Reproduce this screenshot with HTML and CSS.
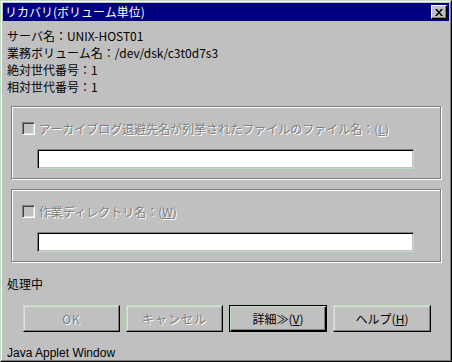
FILE: index.html
```html
<!DOCTYPE html>
<html lang="ja">
<head>
  <meta charset="UTF-8">
  <title>リカバリ(ボリューム単位)</title>
  <link rel="stylesheet" href="styles.css">
</head>
<body>
  <div class="window">
    <div class="frame">
      <div class="titlebar">
        <span class="title">リカバリ(ボリューム単位)</span>
        <span class="close">
          <svg width="8" height="7" viewBox="0 0 8 7"><path d="M0 0h2l2 2.5L6 0h2L5 3.5 8 7H6L4 4.5 2 7H0l3-3.5z" fill="#000"/></svg>
        </span>
      </div>

      <div class="content">
        <div class="info">
          <div>サーバ名：UNIX-HOST01</div>
          <div>業務ボリューム名：/dev/dsk/c3t0d7s3</div>
          <div>絶対世代番号：1</div>
          <div>相対世代番号：1</div>
        </div>

        <div class="group">
          <div class="check">
            <span class="box"></span>
            <span class="label">アーカイブログ退避先名が列挙されたファイルのファイル名：(<u>L</u>)</span>
          </div>
          <div class="field"></div>
        </div>

        <div class="group">
          <div class="check">
            <span class="box"></span>
            <span class="label">作業ディレクトリ名：(<u>W</u>)</span>
          </div>
          <div class="field"></div>
        </div>

        <div class="status">処理中</div>

        <div class="buttons">
          <div class="button disabled">OK</div>
          <div class="button disabled">キャンセル</div>
          <div class="button default">詳細≫(<u>V</u>)</div>
          <div class="button">ヘルプ(<u>H</u>)</div>
        </div>

        <div class="applet">Java Applet Window</div>
      </div>
    </div>
  </div>
</body>
</html>
```

FILE: styles.css
```css
body {
  margin: 0;
  background-color: #c0c0c0;
  font-family: "Noto Sans CJK JP", "Liberation Sans", sans-serif;
  font-size: 12px;
  color: #000;
}

.window {
  width: 452px;
  height: 362px;
  box-sizing: border-box;
  border: 1px solid;
  border-color: #c0dcc0 #000 #000 #c0dcc0;
  background-color: #c0c0c0;
}

.frame {
  height: 100%;
  box-sizing: border-box;
  border: 1px solid;
  border-color: #fff #808080 #808080 #fff;
  padding: 1px;
  display: flex;
  flex-direction: column;
}

/* title bar */
.titlebar {
  height: 18px;
  background-color: #000080;
  display: flex;
  align-items: center;
  justify-content: space-between;
  padding-left: 2px;
}

.title {
  color: #fff;
  line-height: 18px;
}

.close {
  width: 16px;
  height: 14px;
  box-sizing: border-box;
  margin-right: 2px;
  border: 1px solid;
  border-color: #fff #000 #000 #fff;
  box-shadow: inset -1px -1px 0 #808080;
  background-color: #c0c0c0;
  display: flex;
  align-items: center;
  justify-content: center;
}

/* body */
.content {
  flex: 1;
  display: flex;
  flex-direction: column;
}

.info {
  margin-top: 6px;
  padding-left: 4px;
  line-height: 17px;
}

.group {
  margin: 11px 8px 0 8px;
  padding: 15px 26px 9px 10px;
  border: 1px solid #808080;
  box-shadow: inset 1px 1px 0 #fff, 1px 1px 0 #fff;
}

.group + .group {
  margin-top: 10px;
}

.check {
  display: flex;
  align-items: center;
  height: 13px;
  margin-bottom: 14px;
}

.box {
  width: 13px;
  height: 13px;
  box-sizing: border-box;
  border: 1px solid;
  border-color: #808080 #fff #fff #808080;
  box-shadow: inset 1px 1px 0 #404040, inset -1px -1px 0 #dfdfdf;
  background-color: #c0c0c0;
  margin-right: 4px;
}

.label {
  color: #808080;
  text-shadow: 1px 1px 0 #fff;
  white-space: nowrap;
}

.field {
  height: 20px;
  box-sizing: border-box;
  border: 1px solid;
  border-color: #808080 #c0dcc0 #c0dcc0 #808080;
  box-shadow: inset 1px 1px 0 #000, inset -1px -1px 0 #c0c0c0;
  background-color: #fff;
  margin-left: 15px;
}

.status {
  margin-top: 13px;
  padding-left: 4px;
  line-height: 17px;
}

/* buttons */
.buttons {
  display: flex;
  gap: 6px;
  margin-top: 13px;
  padding-left: 20px;
}

.button {
  width: 97px;
  height: 27px;
  box-sizing: border-box;
  border: 1px solid;
  border-color: #c0dcc0 #000 #000 #c0dcc0;
  box-shadow: inset -1px -1px 0 #808080, inset 1px 1px 0 #dfdfdf;
  display: flex;
  align-items: center;
  justify-content: center;
  white-space: nowrap;
}

.button.disabled {
  color: #808080;
  text-shadow: 1px 1px 0 #fff;
  letter-spacing: 1px;
}

.button.default {
  width: 98px;
  border: 1px solid #000;
  box-shadow: inset 1px 1px 0 #c0dcc0, inset -1px -1px 0 #000, inset -2px -2px 0 #808080;
}

.buttons .button:last-child {
  width: 98px;
}

.applet {
  margin-top: auto;
  padding-left: 4px;
  line-height: 12px;
  font-family: "Liberation Sans", sans-serif;
}
```
